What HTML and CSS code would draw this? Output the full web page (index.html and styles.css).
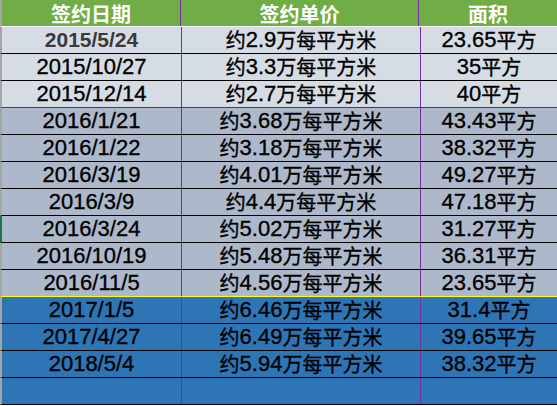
FILE: index.html
```html
<!DOCTYPE html>
<html lang="zh">
<head>
<meta charset="utf-8">
<link rel="stylesheet" href="styles.css">
</head>
<body>
<div class="sheet">
  <div class="row head">
    <div class="c c1">签约日期</div>
    <div class="c c2">签约单价</div>
    <div class="c c3">面积</div>
  </div>
  <div class="row light">
    <div class="c c1 first">2015/5/24</div>
    <div class="c c2"><span class="cn">约</span>2.9<span class="cn">万每平方米</span></div>
    <div class="c c3">23.65<span class="cn">平方</span></div>
  </div>
  <div class="row light">
    <div class="c c1">2015/10/27</div>
    <div class="c c2"><span class="cn">约</span>3.3<span class="cn">万每平方米</span></div>
    <div class="c c3">35<span class="cn">平方</span></div>
  </div>
  <div class="row light red">
    <div class="c c1">2015/12/14</div>
    <div class="c c2"><span class="cn">约</span>2.7<span class="cn">万每平方米</span></div>
    <div class="c c3">40<span class="cn">平方</span></div>
  </div>
  <div class="row mid">
    <div class="c c1">2016/1/21</div>
    <div class="c c2"><span class="cn">约</span>3.68<span class="cn">万每平方米</span></div>
    <div class="c c3">43.43<span class="cn">平方</span></div>
  </div>
  <div class="row mid">
    <div class="c c1">2016/1/22</div>
    <div class="c c2"><span class="cn">约</span>3.18<span class="cn">万每平方米</span></div>
    <div class="c c3">38.32<span class="cn">平方</span></div>
  </div>
  <div class="row mid">
    <div class="c c1">2016/3/19</div>
    <div class="c c2"><span class="cn">约</span>4.01<span class="cn">万每平方米</span></div>
    <div class="c c3">49.27<span class="cn">平方</span></div>
  </div>
  <div class="row mid">
    <div class="c c1">2016/3/9</div>
    <div class="c c2"><span class="cn">约</span>4.4<span class="cn">万每平方米</span></div>
    <div class="c c3">47.18<span class="cn">平方</span></div>
  </div>
  <div class="row mid marked">
    <div class="c c1">2016/3/24</div>
    <div class="c c2"><span class="cn">约</span>5.02<span class="cn">万每平方米</span></div>
    <div class="c c3">31.27<span class="cn">平方</span></div>
  </div>
  <div class="row mid">
    <div class="c c1">2016/10/19</div>
    <div class="c c2"><span class="cn">约</span>5.48<span class="cn">万每平方米</span></div>
    <div class="c c3">36.31<span class="cn">平方</span></div>
  </div>
  <div class="row mid yellow">
    <div class="c c1">2016/11/5</div>
    <div class="c c2"><span class="cn">约</span>4.56<span class="cn">万每平方米</span></div>
    <div class="c c3">23.65<span class="cn">平方</span></div>
  </div>
  <div class="row blue">
    <div class="c c1">2017/1/5</div>
    <div class="c c2"><span class="cn">约</span>6.46<span class="cn">万每平方米</span></div>
    <div class="c c3">31.4<span class="cn">平方</span></div>
  </div>
  <div class="row blue">
    <div class="c c1">2017/4/27</div>
    <div class="c c2"><span class="cn">约</span>6.49<span class="cn">万每平方米</span></div>
    <div class="c c3">39.65<span class="cn">平方</span></div>
  </div>
  <div class="row blue">
    <div class="c c1">2018/5/4</div>
    <div class="c c2"><span class="cn">约</span>5.94<span class="cn">万每平方米</span></div>
    <div class="c c3">38.32<span class="cn">平方</span></div>
  </div>
  <div class="row blue">
    <div class="c c1"></div>
    <div class="c c2"></div>
    <div class="c c3"></div>
  </div>
</div>
</body>
</html>
```
FILE: styles.css
```css
html, body {
  margin: 0;
  padding: 0;
  background: #ffffff;
}
.sheet {
  width: 557px;
  display: flex;
  flex-direction: column;
  font-family: "Liberation Sans", "Noto Sans CJK SC", sans-serif;
  font-size: 22px;
  color: #000;
}
.row {
  display: flex;
  height: 26px;
  border-bottom: 1px solid #000;
  border-left: 2px solid #a6a6a6;
  -webkit-text-stroke: 0.35px currentColor;
}
.row.head {
  background: #70ad47;
  color: #fff;
  border-bottom-color: #ffffff;
  font-family: "Noto Sans CJK SC", sans-serif;
  font-weight: bold;
  font-size: 20px;
  -webkit-text-stroke: 0;
}
.row.light { background: #d6dce4; }
.row.mid { background: #adb9ca; }
.row.blue { background: #2e75b6; }
.row.red { border-bottom-color: #e00000; }
.row.yellow { border-bottom-color: #ffff00; }
.row.marked { border-left-color: #217346; }
.c {
  display: flex;
  align-items: center;
  justify-content: center;
  line-height: 22px;
  white-space: nowrap;
}
.row.head .c {
  line-height: 20px;
  padding-top: 2px;
  box-sizing: border-box;
}
.c1 {
  width: 179px;
  border-right: 1px solid #7030a0;
}
.c2 {
  width: 238px;
  border-right: 1px solid #7030a0;
}
.c3 {
  flex: 1;
}
.cn {
  font-family: "Noto Sans CJK SC", sans-serif;
  font-size: 20px;
  line-height: 20px;
}
.first {
  font-weight: bold;
  font-size: 21px;
  color: #3a3a3a;
  -webkit-text-stroke: 0;
}
```
